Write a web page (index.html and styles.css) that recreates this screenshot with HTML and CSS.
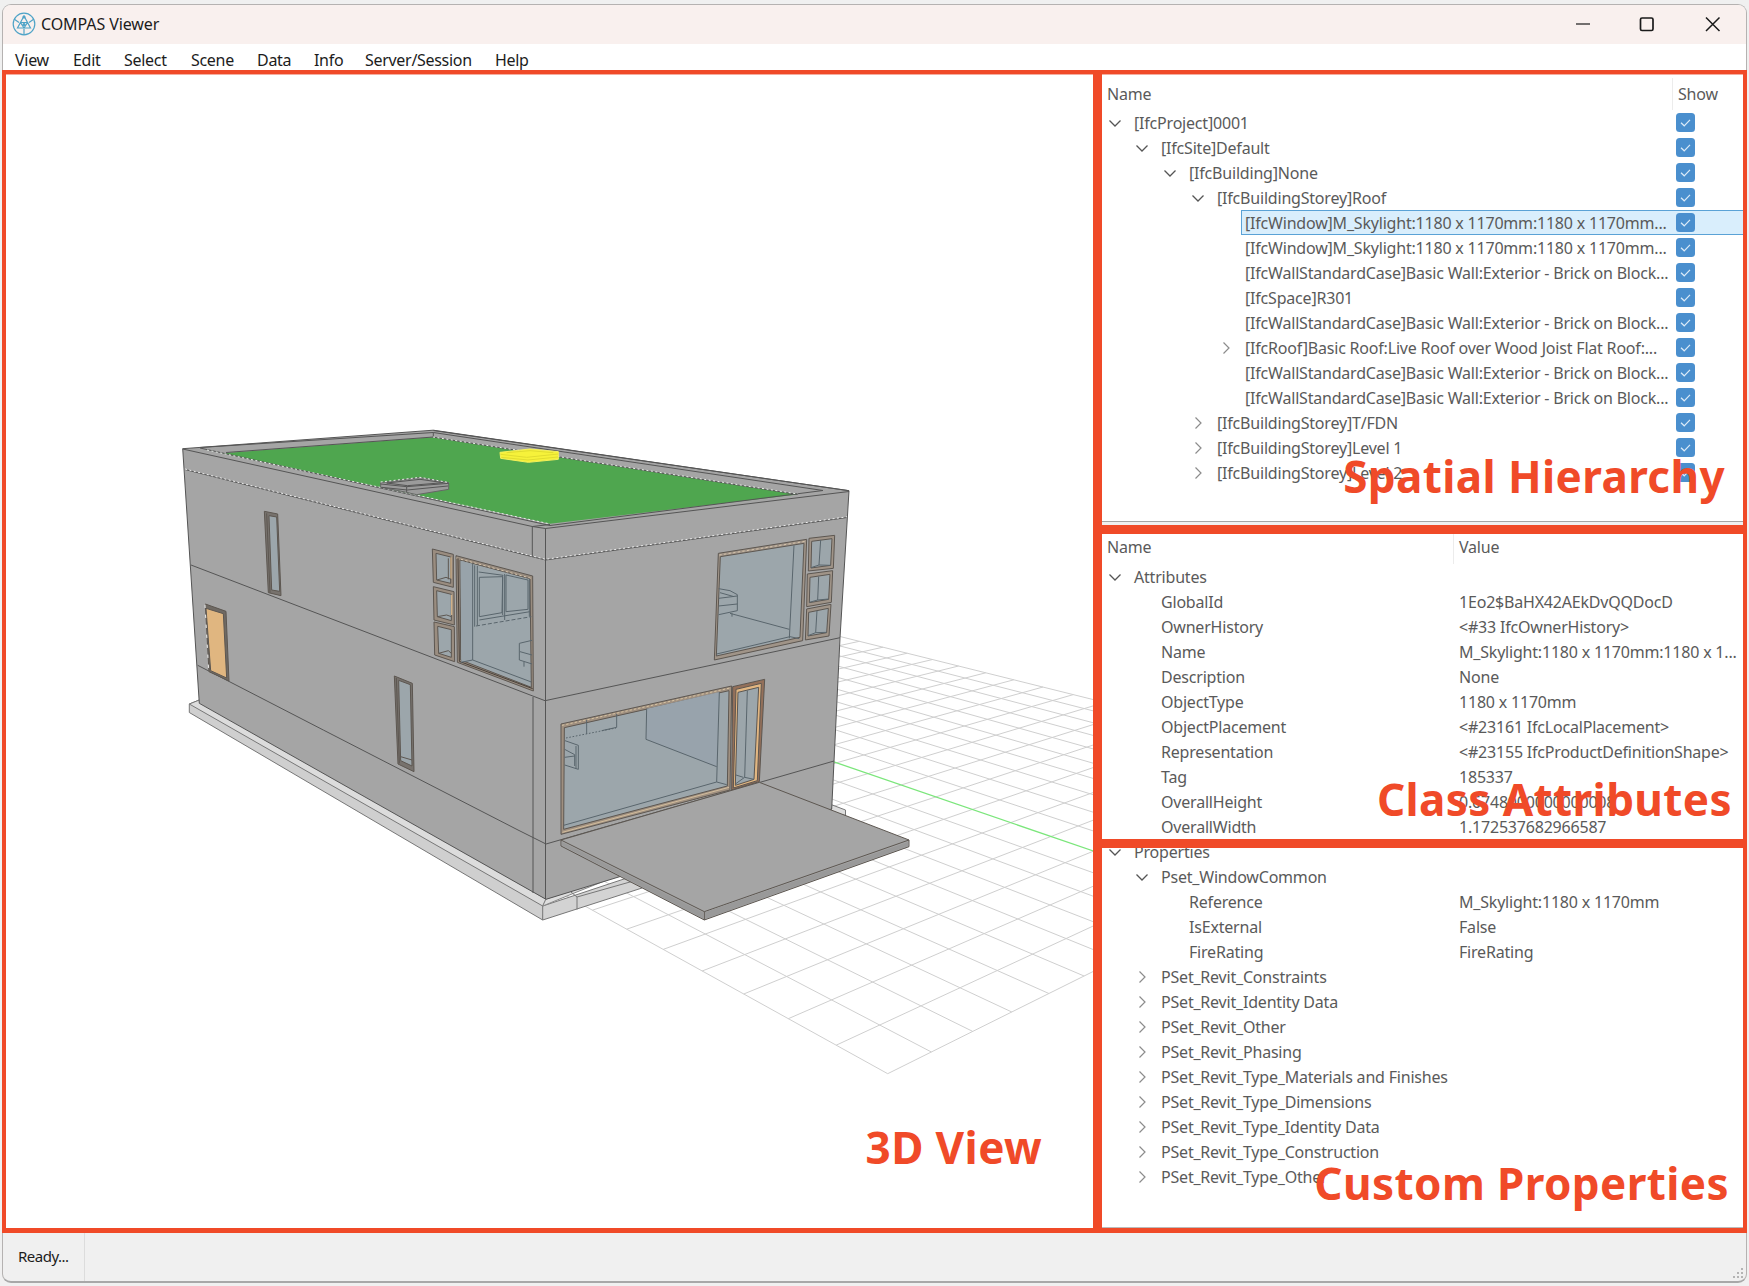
FILE: index.html
```html
<!DOCTYPE html>
<html lang="en">
<head>
<meta charset="utf-8">
<title>COMPAS Viewer</title>
<link rel="stylesheet" href="styles.css">
</head>
<body>
<svg class="defs" width="0" height="0" aria-hidden="true">
  <symbol id="open" viewBox="0 0 14 14"><path d="M1.500 4.500 7 10l5.500-5.500" fill="none" stroke="#555" stroke-width="1.300"/></symbol>
  <symbol id="closed" viewBox="0 0 14 14"><path d="M4.500 1.500 10 7l-5.500 5.500" fill="none" stroke="#8c8c8c" stroke-width="1.200"/></symbol>
  <symbol id="check" viewBox="0 0 19 19"><rect width="19" height="19" rx="3.500" fill="#4a8fce"/><path d="M5 9.800 8.200 12.800 14 6.800" fill="none" stroke="#dcebf8" stroke-width="1.200"/></symbol>
</svg>
<div class="window">
  <header class="titlebar">
    <svg class="logo" viewBox="0 0 24 24" fill="none" stroke="#4fa3c7" stroke-width="1.200">
      <circle cx="12" cy="12" r="10.800"/>
      <path d="M12 4 5.500 16h13zM12 17v6M2 7l5 3.500M22 7l-5 3.500M8.500 10.500h7L12 16z"/>
      <circle cx="12" cy="5" r="1" fill="#4fa3c7"/>
      <circle cx="12" cy="12.500" r="1" fill="#4fa3c7"/>
    </svg>
    <h1 class="title">COMPAS Viewer</h1>
    <svg class="controls" viewBox="0 0 150 20" fill="none" stroke="#1a1a1a">
      <path d="M1 10h14" stroke-width="1.200"/>
      <rect x="65.500" y="4" width="12.500" height="12.500" rx="1.500" stroke-width="1.700"/>
      <path d="M131 3.500 144.500 17M144.500 3.500 131 17" stroke-width="1.500"/>
    </svg>
  </header>
  <nav class="menubar">
    <span class="m1">View</span><span class="m2">Edit</span><span class="m3">Select</span><span class="m4">Scene</span><span class="m5">Data</span><span class="m6">Info</span><span class="m7">Server/Session</span><span class="m8">Help</span>
  </nav>
  <main class="main">
    <section class="frame viewport">
      <svg class="scene" viewBox="6 74 1087 1154">
        <g id="grid" stroke="#cfcfcf" stroke-width="1"></g>
        <g stroke-linejoin="round" stroke="#555" stroke-width="1">
          <path d="M189.300 704 199.300 700 546 894 542.700 920 189.300 712.500z" fill="#cfcfcf" stroke="#777"/>
          <path d="M189.300 704 199.300 700 546 899 542.700 906z" fill="#dcdcdc" stroke="#777"/>
          <path d="M542.700 906 642 873v15L542.700 920z" fill="#d3d3d3" stroke="#777"/>
          <path d="M546 899 617 876 573 893.500 542.700 906z" fill="#dedede" stroke="#888"/>
          <path d="M571 892l6 5v12.500M577 897l60-17" fill="none" stroke="#777"/>
          <path d="M831 804.500 845.500 810v5.500l-14-3z" fill="#dcdcdc" stroke="#777"/>
          <path d="M182.700 448.700 433.300 430.200 849 490.700 840 638 831.700 809 700 852 546 899.300 199.300 703.300z" fill="#a5a5a5"/>
          <path d="M222 453.200 433.300 437.200 798 494.500 550 523.700z" fill="#4fa64f" stroke="none"/>
          <path d="M200 447.500 433.300 432.500 823 490.500 550 525.500 200 448M433.300 432.500v5M433.300 437.200 798 494.500M433.300 430.500 849 490.700M182.700 449 532.300 526.500 545.500 528.500 849 491.500M532.300 526.500 550 524.500M226 452.500 433.300 437" fill="none"/>
          <path d="M207 450 548 523.500M433 437 798 494" fill="none" stroke="#e8eee8" stroke-dasharray="2 2.500"/>
          <path d="M545.500 528.500V899M532.300 526.500V556M533 697V893M185 469.500 545.500 560 847 517.500M191 565 545 700.700 840 637.700M197.700 665.300 323.300 730 518 830 546 844 834 761" fill="none"/>
          <path d="M185 469 545.500 559.300 847 516.800" fill="none" stroke="#eee" stroke-dasharray="2 2.500"/>
        </g>
        <!-- left facade and roof -->
        <g transform="translate(160 400) scale(.33333)" stroke="#5c5650" stroke-width="3" fill="none">
          <path d="M662 248 780 233 866 248V268L770 284 735 276 662 262z" fill="#9b9b9b" stroke="#666"/>
          <path d="M662 252 740 260 866 250M665 262 742 270 864 258M740 260V276M680 249 780 238 850 248 742 257z" stroke="#555"/>
          <path d="M662 246 780 232 868 248" stroke="#eee" stroke-dasharray="6 7"/>
          <path d="M1020 157 1110 147 1195 155V178L1105 187 1022 175z" fill="#f6f23a" stroke="#f4ef5a"/>
          <path d="M1022 163 1100 172 1195 162M1024 172 1104 180 1194 171M1040 158 1110 152 1180 158" stroke="#e0dc30"/>
          <path d="M313 334 353 342 363 587 325 578z" fill="#77726d"/>
          <path d="M327 347 350 351 359 574 335 570z" fill="#9ca6ab"/>
          <path d="M320 340 330 578" />
          <path d="M136 612 198 634 207 843 147 815z" fill="#6f6a64"/>
          <path d="M138 625 190 641 200 834 152 812z" fill="#e0b680"/>
          <path d="M135 614 146 812" stroke="#eee" stroke-dasharray="10 20"/>
          <path d="M703 828 757 850 762 1115 714 1092z" fill="#77726d"/>
          <path d="M716 841 751 854 756 1098 722 1082z" fill="#9ca6ab"/>
          <path d="M722 1070 756 1080M709 834 718 1090"/>
        </g>
        <g transform="translate(400 500) scale(.33333)" stroke="#5c5650" stroke-width="3" fill="none">
          <path d="M97 147 160 163V262L100 247zM100 260 162 275 163 375 102 360zM102 366 163 380 164 485 104 465z" fill="#9a8d80"/>
          <path d="M108 160 152 171V250L110 240zM110 272 154 283V362L112 350zM113 379 154 389V472L116 460z" fill="#9ca6ab"/>
          <path d="M153 172V236M155 284V345" stroke="#d0b088" stroke-width="4"/>
          <path d="M111 240 138 232 153 238M112 350 140 345 154 350M116 460 145 452 154 460M145 175V238"/>
          <path d="M168 167 398 228 400 573 172 487z" fill="#9a8d80"/>
          <path d="M180 180 390 236 394 562 182 480z" fill="#9ca6ab"/>
          <path d="M169 174 397 236" stroke="#d6c4ab" stroke-dasharray="7 7"/>
          <path d="M174 174 178 484 398 566" stroke="#473f38"/>
          <path d="M182 182 218 192V482L184 486z" fill="#98a3aa" stroke="none"/>
          <path d="M218 192V480L394 546M182 487 218 480M232 198V376M224 196V380M238 232 308 230 306 338 238 350zM318 225 384 240V328L318 335zM308 226V345M314 222V360M236 216 310 226M238 360 390 335M388 236V350" stroke="#59656c"/>
          <path d="M228 378 394 350" stroke="#59656c" stroke-dasharray="12 6"/>
          <path d="M396 421 358 430V480L396 492M360 455 396 465M372 486V500" stroke="#59656c"/>
        </g>
        <!-- right facade, upper floor -->
        <g transform="translate(530 400) scale(.33333)" stroke="#5c5650" stroke-width="3" fill="none">
          <path d="M565 460 830 418 818 722 553 780z" fill="#a09488"/>
          <path d="M571 470 822 430 810 712 559 768z" fill="#9ca6ab"/>
          <path d="M568 465 826 424" stroke="#d6c4ab" stroke-dasharray="7 7"/>
          <path d="M792 436 778 715M560 762 780 710 808 716M566 566 600 572 622 584V632L566 644M566 595 622 588M566 618 622 612M570 578 612 590M600 640 778 688M606 640V650" stroke="#59656c"/>
          <path d="M837 415 914 406 910 505 835 513zM832 522 908 512 904 607 830 620zM830 627 903 613 897 708 826 720z" fill="#a09488"/>
          <path d="M845 424 906 416 902 496 843 504zM840 532 900 523 896 598 838 608zM836 637 895 625 890 698 834 708z" fill="#9ca6ab"/>
          <path d="M872 420 867 495 843 503M867 495 902 496M866 530 863 600 838 607M863 600 896 597M861 632 857 698 834 707M857 698 890 697" stroke="#59656c"/>
        </g>
        <!-- right facade, ground floor and entrance slab -->
        <g transform="translate(530 660) scale(.33333)" stroke="#5c5650" stroke-width="3" fill="none">
          <path d="M93 192 605 78 600 390 93 523z" fill="#a09080"/>
          <path d="M103 203 597 92 592 378 101 508z" fill="#9ca6ab"/>
          <path d="M96 196 600 84" stroke="#d8c4a2" stroke-dasharray="7 6"/>
          <path d="M97 517 597 382" stroke="#d3bd9c"/>
          <path d="M350 146 568 96 560 365V320L348 238z" fill="#98a3ac" stroke="none"/>
          <path d="M350 146 348 238 560 320M568 96 560 366 590 374M101 496 560 366M170 180V222M260 162V202L215 212M105 242 145 256V328L104 315M104 268 134 284V318M104 292 134 288M138 258V326" stroke="#59656c"/>
          <path d="M108 234 258 204" stroke="#59656c" stroke-dasharray="5 5"/>
          <path d="M608 80 704 58 688 365 605 390z" fill="#94705a"/>
          <path d="M618 88 694 70 682 362 610 384z" fill="#e2b681"/>
          <path d="M624 97 686 82 672 358 616 376z" fill="#9ca6ab"/>
          <path d="M652 92 644 352M616 372 644 352 672 358M618 345 640 352" stroke="#59656c"/>
          <path d="M93 540 688 367 1137 540V560L523 780 93 558z" fill="#a5a5a5"/>
          <path d="M93 540 523 755 1137 540M523 755V780" />
          <path d="M525 757 1135 545V558L525 777zM95 545 521 758V776L95 556z" fill="#999" stroke="none"/>
        </g>
      </svg>
      <strong class="tag tag-view">3D View</strong>
    </section>
    <div class="side">
      <section class="frame hierarchy">
        <div class="head"><span>Name</span><span class="show">Show</span></div>
        <div class="tree" id="hierarchy"></div>
        <strong class="tag tag-hierarchy">Spatial Hierarchy</strong>
      </section>
      <section class="frame attributes">
        <div class="head"><span>Name</span><span class="value-head">Value</span></div>
        <div class="tree" id="attributes"></div>
        <strong class="tag tag-attributes">Class Attributes</strong>
      </section>
      <section class="frame properties">
        <div class="tree" id="properties"></div>
        <strong class="tag tag-properties">Custom Properties</strong>
      </section>
    </div>
  </main>
  <footer class="status"><span class="ready">Ready...</span>
    <svg class="grip" viewBox="0 0 12 12" fill="#b4b4b4"><path d="M9 0h2v2H9zM9 4h2v2H9zM9 8h2v2H9zM5 4h2v2H5zM5 8h2v2H5zM1 8h2v2H1z"/></svg>
  </footer>
</div>
<script src="app.js"></script>
</body>
</html>
```
FILE: styles.css
```css
* { box-sizing: border-box; }
body {
  margin: 0;
  padding: 4px 2px 0;
  height: 1286px;
  overflow: hidden;
  background: #f0f0f0;
  font-family: "Noto Sans", "Open Sans", sans-serif;
  font-size: 16px;
  color: #5a5a5a;
}
.defs { position: absolute; }
.window {
  display: flex;
  flex-direction: column;
  height: 1279px;
  border: 1px solid #b5b2b1;
  border-bottom: 2px solid #a8a8a8;
  border-radius: 9px;
  background: #f0f0f0;
}
.titlebar {
  flex: none;
  display: flex;
  align-items: center;
  height: 39px;
  padding: 0 21px 2px 9px;
  border-radius: 8px 8px 0 0;
  background: #f9f0ee;
}
.logo { width: 24px; height: 24px; }
.title {
  flex: 1;
  margin: 0 0 0 5px;
  font-size: 16px;
  font-weight: 400;
  letter-spacing: -0.1px;
  color: #1c1c1c;
}
.controls { width: 150px; height: 20px; }
.menubar {
  flex: none;
  display: flex;
  height: 26px;
  padding-left: 12px;
  line-height: 32px;
  background: #fff;
  color: #1c1c1c;
  letter-spacing: -0.3px;
}
.m1 { width: 58px; }
.m2 { width: 51px; }
.m3 { width: 67px; }
.m4 { width: 66px; }
.m5 { width: 57px; }
.m6 { width: 51px; }
.m7 { width: 130px; }
.main {
  flex: none;
  display: grid;
  grid-template-columns: 1096px 1fr;
  height: 1163px;
  margin: 0 -1px;
}
.frame {
  position: relative;
  overflow: hidden;
  border: solid #f04a28;
  border-width: 4px 4px 5px;
  background: #fff;
}
.viewport { border-right-width: 5px; box-shadow: inset 0 1px #f4ada0; }
.scene { display: block; width: 1087px; height: 1154px; }
.side {
  display: grid;
  grid-template-rows: 460px 314px 1fr;
}
.hierarchy { display: flex; flex-direction: column; box-shadow: inset 0 1px #f4ada0; }
.hierarchy .tree { flex: 1; border-bottom: 1px solid #a5a5a5; margin-bottom: 3px; }
.hierarchy::after { content: ""; position: absolute; inset: auto 0 0; height: 3px; background: #f0f0f0; }
.properties::after { content: ""; position: absolute; inset: auto 0 0; height: 1px; background: #bbb; }
.head {
  display: flex;
  flex: none;
  height: 36px;
  padding: 4px 0 0 5px;
  line-height: 32px;
  letter-spacing: -0.2px;
}
.show { margin: 0 0 0 auto; width: 71px; padding-left: 5px; border-left: 1px solid #ececec; }
.attributes .head { height: 30px; padding-top: 0; line-height: 27px; }
.value-head { margin-left: auto; width: 290px; padding-left: 5px; border-left: 1px solid #ececec; }
.row { display: flex; align-items: center; height: 25px; white-space: nowrap; }
.d0 { padding-left: 6px; }
.d1 { padding-left: 33px; }
.d2 { padding-left: 61px; }
.d3 { padding-left: 89px; }
.d4 { padding-left: 117px; }
.chev { flex: none; width: 14px; height: 14px; margin-right: 8px; }
.cells {
  flex: 1;
  display: flex;
  align-items: center;
  justify-content: space-between;
  height: 25px;
  padding-left: 3px;
  border: solid transparent;
  border-width: 1px 0 1px 1px;
  letter-spacing: -0.2px;
}
.selected .cells { border-color: #5aa2d6; background: #d9eefc; }
.box { flex: none; width: 19px; height: 19px; margin-right: 48px; }
.value { flex: none; width: 284px; }
.properties .tree { margin-top: -9px; }
.tag {
  position: absolute;
  font-size: 44px;
  line-height: 58px;
  font-weight: 700;
  letter-spacing: 0.4px;
  color: #f04a28;
  white-space: nowrap;
}
.tag-view { right: 51px; bottom: 52px; }
.tag-hierarchy { right: 18px; bottom: 20px; }
.tag-attributes { right: 11px; bottom: 11px; }
.tag-properties { right: 14px; bottom: 16px; }
.status {
  flex: 1;
  display: flex;
  justify-content: space-between;
  align-items: flex-end;
  color: #1c1c1c;
}
.ready {
  align-self: stretch;
  width: 82px;
  padding-left: 15px;
  line-height: 47px;
  border-right: 1px solid #dcdcdc;
  font-size: 15px;
  letter-spacing: -0.5px;
}
.grip { width: 12px; height: 12px; margin: 0 2px 1px 0; }
```
FILE: app.js
```js
// Rows are [depth, state, name, value]; state is "open", "closed" or "".
const wall = "[IfcWallStandardCase]Basic Wall:Exterior - Brick on Block...";
const skylight = "[IfcWindow]M_Skylight:1180 x 1170mm:1180 x 1170mm...";
const trees = {
  hierarchy: [
    [0, "open", "[IfcProject]0001"],
    [1, "open", "[IfcSite]Default"],
    [2, "open", "[IfcBuilding]None"],
    [3, "open", "[IfcBuildingStorey]Roof"],
    [4, "", skylight],
    [4, "", skylight],
    [4, "", wall],
    [4, "", "[IfcSpace]R301"],
    [4, "", wall],
    [4, "closed", "[IfcRoof]Basic Roof:Live Roof over Wood Joist Flat Roof:..."],
    [4, "", wall],
    [4, "", wall],
    [3, "closed", "[IfcBuildingStorey]T/FDN"],
    [3, "closed", "[IfcBuildingStorey]Level 1"],
    [3, "closed", "[IfcBuildingStorey]Level 2"]
  ],
  attributes: [
    [0, "open", "Attributes", ""],
    [1, "", "GlobalId", "1Eo2$BaHX42AEkDvQQDocD"],
    [1, "", "OwnerHistory", "<#33 IfcOwnerHistory>"],
    [1, "", "Name", "M_Skylight:1180 x 1170mm:1180 x 1..."],
    [1, "", "Description", "None"],
    [1, "", "ObjectType", "1180 x 1170mm"],
    [1, "", "ObjectPlacement", "<#23161 IfcLocalPlacement>"],
    [1, "", "Representation", "<#23155 IfcProductDefinitionShape>"],
    [1, "", "Tag", "185337"],
    [1, "", "OverallHeight", "0.6748000000000008"],
    [1, "", "OverallWidth", "1.172537682966587"]
  ],
  properties: [
    [0, "open", "Properties", ""],
    [1, "open", "Pset_WindowCommon", ""],
    [2, "", "Reference", "M_Skylight:1180 x 1170mm"],
    [2, "", "IsExternal", "False"],
    [2, "", "FireRating", "FireRating"],
    [1, "closed", "PSet_Revit_Constraints", ""],
    [1, "closed", "PSet_Revit_Identity Data", ""],
    [1, "closed", "PSet_Revit_Other", ""],
    [1, "closed", "PSet_Revit_Phasing", ""],
    [1, "closed", "PSet_Revit_Type_Materials and Finishes", ""],
    [1, "closed", "PSet_Revit_Type_Dimensions", ""],
    [1, "closed", "PSet_Revit_Type_Identity Data", ""],
    [1, "closed", "PSet_Revit_Type_Construction", ""],
    [1, "closed", "PSet_Revit_Type_Other", ""]
  ]
};
const esc = s => s.replace(/</g, "&lt;").replace(/>/g, "&gt;");
for (const [id, rows] of Object.entries(trees)) {
  document.getElementById(id).innerHTML = rows.map(([depth, state, name, value], i) => {
    const icon = state ? `<use href="#${state}"/>` : "";
    const last = id === "hierarchy"
      ? `<svg class="box"><use href="#check"/></svg>`
      : `<span class="value">${esc(value)}</span>`;
    const sel = id === "hierarchy" && i === 4 ? " selected" : "";
    return `<div class="row d${depth}${sel}"><svg class="chev">${icon}</svg><div class="cells"><span>${esc(name)}</span>${last}</div></div>`;
  }).join("");
}

// Ground plane: 20 x 20 cells projected to the viewport.
const project = (i, j) => {
  const w = 1 + 0.0289 * i + 0.0383 * j;
  return [(887.7 + 70.6 * i - 19.5 * j) / w, (1073.7 + 8.67 * i + 11.5 * j) / w].map(n => n.toFixed(1)).join(" ");
};
let d = "";
for (let k = 0; k <= 20; k++) {
  if (k !== 10) d += `M${project(k, 0)}L${project(k, 20)}`;
  d += `M${project(0, k)}L${project(20, k)}`;
}
document.getElementById("grid").innerHTML =
  `<path d="${d}"/><path d="M${project(10, 0)}L${project(10, 20)}" stroke="#7be67b" stroke-width="1.300"/>`;
```
